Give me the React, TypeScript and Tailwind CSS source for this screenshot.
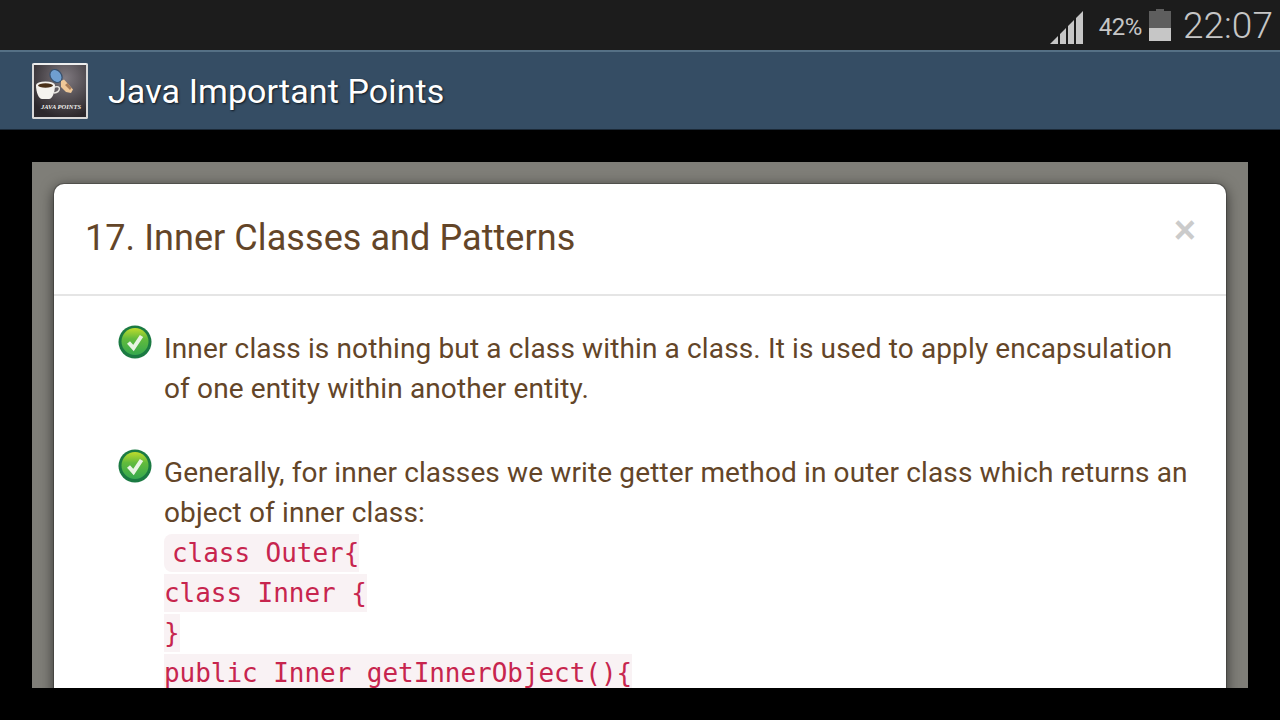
import React from 'react';

const CODE_LINES = ['class Outer{', 'class Inner {', '}', 'public Inner getInnerObject(){'];

const CheckBadge: React.FC = () => (
  <svg width="34" height="34" viewBox="0 0 34 34" className="shrink-0">
    <defs>
      <linearGradient id="badge" x1="0" y1="0" x2="0" y2="1">
        <stop offset="0" stopColor="#c0dc2c" />
        <stop offset="0.4" stopColor="#62bb3c" />
        <stop offset="1" stopColor="#35a84e" />
      </linearGradient>
    </defs>
    <circle cx="17" cy="17" r="16.500" fill="#1b7a42" />
    <circle cx="17" cy="16.500" r="13.500" fill="url(#badge)" />
    <path d="M10.500 17.500l5 5.500 8-12" fill="none" stroke="#e9f4e4" strokeWidth="4" />
  </svg>
);

const AppLogo: React.FC = () => (
  <div className="relative w-[56px] h-[56px] border-2 border-[#d8d8d8] border-t-[#eeeeee] rounded-[2px] overflow-hidden bg-[radial-gradient(circle_at_60%_25%,#807a80,#2c282c_80%)]">
    <svg width="52" height="52" viewBox="0 0 52 52" className="absolute left-0 top-0">
      <ellipse cx="22" cy="11" rx="5.500" ry="7" transform="rotate(-38 22 11)" fill="#6f9fd0" stroke="#38506c" strokeWidth="1.200" />
      <path d="M27 16l3-1.500 9 10-2 3.500-5-1-5-5z" fill="#f0c898" />
      <path d="M31 20l5 5 1.500-2-4-5z" fill="#a87c58" />
      <path d="M2 20h19c0 8-3 14-6 14H8c-3 0-6-6-6-14z" fill="#f4f2ee" />
      <ellipse cx="11.500" cy="20" rx="9.500" ry="3.500" fill="#f4f2ee" />
      <ellipse cx="11.500" cy="20.500" rx="7.500" ry="2.200" fill="#4a3018" />
      <path d="M21 22c6-2 6 5-1 6" fill="none" stroke="#e8e6e0" strokeWidth="1.400" />
    </svg>
    <span className="absolute left-[7px] top-[37px] text-[6.500px] leading-[9px] italic font-bold text-[#f2f0ee] font-['Liberation_Serif',serif] whitespace-nowrap">
      JAVA POINTS
    </span>
  </div>
);

const StatusBar: React.FC = () => (
  <div className="h-[50px] bg-[#1c1c1c] flex items-center justify-end pr-[7px] text-[#c6c6c6] font-['Roboto',sans-serif]">
    <svg width="34" height="34" viewBox="0 0 34 34" className="mt-[5px] mr-[15px]">
      <path d="M0 33L8 25V33zM10 23L16 17V33H10zM18 15L24 9V33H18zM26 7L33 0V33H26z" fill="#c6c6c6" />
    </svg>
    <span className="text-[24px] leading-none tracking-[-0.5px] mr-[7px] mt-[4px]">42%</span>
    <div className="w-[22px] h-[32px] mr-[12px] flex flex-col items-center">
      <div className="w-[8px] h-[2px] bg-[#5e5e5e]" />
      <div className="w-[22px] h-[17px] bg-[#5e5e5e]" />
      <div className="w-[22px] h-[13px] bg-[#c6c6c6]" />
    </div>
    <span className="text-[37px] leading-none font-light tracking-[0.05px]">22:07</span>
  </div>
);

const AppBar: React.FC = () => (
  <div className="h-[80px] bg-[#354d64] border-t-2 border-t-[#557085] border-b border-b-[#1c2a38] flex items-center pl-[32px] gap-[20px]">
    <AppLogo />
    <span className="text-[34px] leading-[42px] pt-[1px] tracking-[0.1px] text-white font-['Roboto',sans-serif] [text-shadow:1px_1px_2px_#101820]">
      Java Important Points
    </span>
  </div>
);

const Bullet: React.FC<{ children: React.ReactNode }> = ({ children }) => (
  <div className="flex items-start">
    <div className="w-[46px] shrink-0 -mt-[4px] -ml-[46px]">
      <CheckBadge />
    </div>
    <div className="flex-1">{children}</div>
  </div>
);

const App: React.FC = () => {
  return (
    <div className="w-[1280px] h-[720px] bg-black overflow-hidden flex flex-col">
      <StatusBar />
      <AppBar />
      <div className="flex-1 pt-[32px] pb-[32px] px-[32px] min-h-0">
        <div className="h-full bg-[#7f7e78] px-[22px] pt-[22px] overflow-hidden">
          <div className="bg-white rounded-[10px] shadow-[0_0_0_1px_rgba(0,0,0,0.2),0_3px_14px_rgba(0,0,0,0.65)] h-[600px] font-['Roboto',sans-serif] text-[#634528]">
            <div className="relative h-[112px] border-b-2 border-[#e5e5e5] pl-[31px] pt-[30px]">
              <h1 className="text-[36px] leading-[48px] tracking-[0.07px]">17. Inner Classes and Patterns</h1>
              <span className="absolute right-[30px] top-[24px] text-[#cbcbcb] font-bold text-[38px] leading-[44px] font-['Liberation_Sans',sans-serif]">
                ×
              </span>
            </div>
            <div className="pl-[110px] pr-[30px] pt-[33px] text-[28px] leading-[40px] tracking-[0.13px] flex flex-col gap-[44px]">
              <Bullet>
                Inner class is nothing but a class within a class. It is used to apply encapsulation of one entity within another entity.
              </Bullet>
              <Bullet>
                Generally, for inner classes we write getter method in outer class which returns an object of inner class:
                {CODE_LINES.map((line, i) => (
                  <div key={i}>
                    <code className={`font-['DejaVu_Sans_Mono',monospace] text-[26px] tracking-[-0.05px] text-[#c7254e] bg-[#f9f2f4] py-[4px] ${i === 0 ? 'rounded-l-[8px] pl-[8px]' : ''}`}>
                      {line}
                    </code>
                  </div>
                ))}
              </Bullet>
            </div>
          </div>
        </div>
      </div>
    </div>
  );
};

export default App;
